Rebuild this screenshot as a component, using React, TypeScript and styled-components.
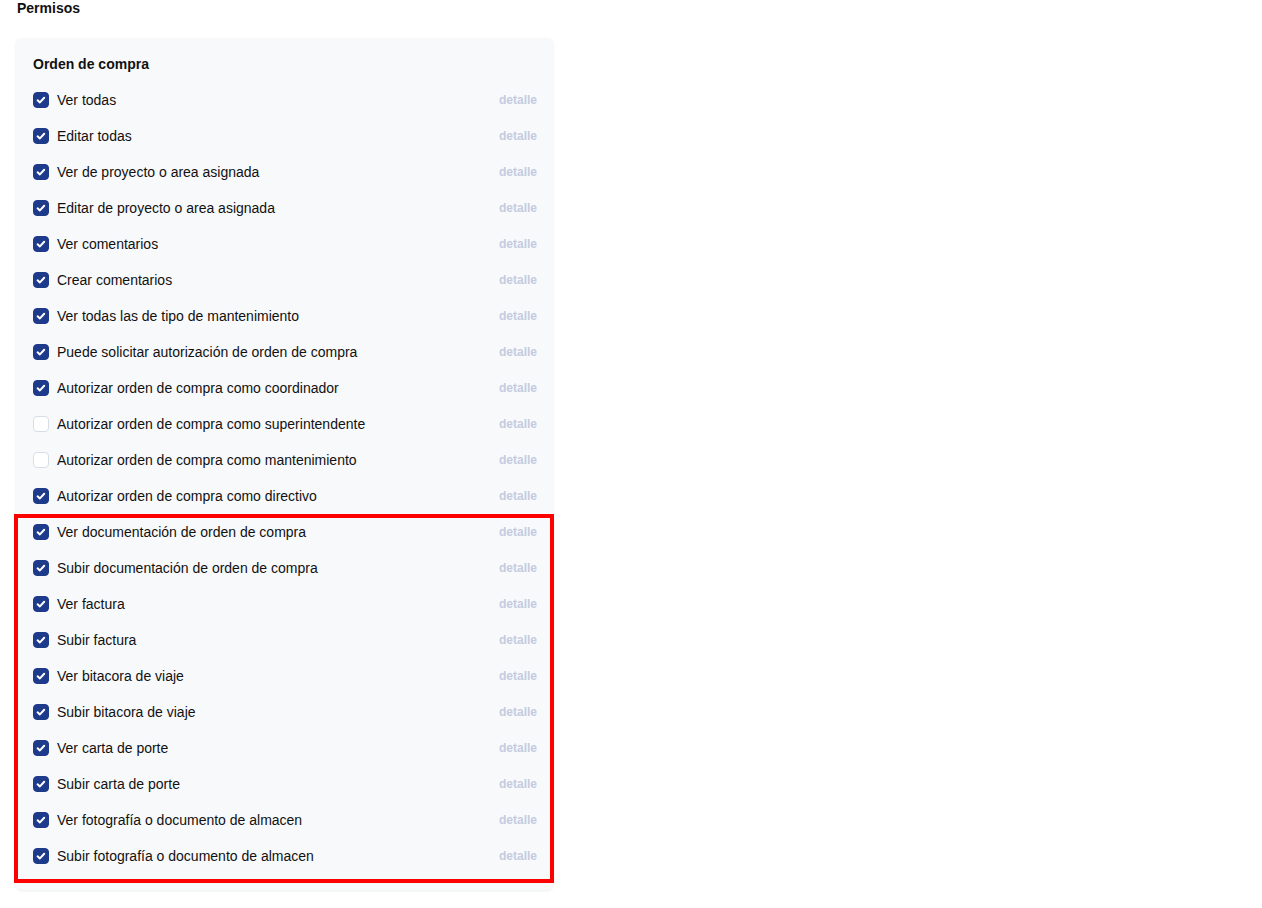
import React from "react";
import styled, { createGlobalStyle } from "styled-components";

const Global = createGlobalStyle`
  html, body { margin: 0; padding: 0; background: #ffffff; }
  body { font-family: "Liberation Sans", Arial, Helvetica, sans-serif; color: #111111; }
  * { box-sizing: border-box; }
`;

const Page = styled.div`
  padding: 0 16px;
  width: 1262px;
  min-height: 908px;
`;

const Heading = styled.h2`
  margin: 0 0 22px 1px;
  font-size: 14px;
  line-height: 16px;
  font-weight: 700;
  color: #111111;
`;

const Card = styled.section`
  position: relative;
  width: 537px;
  background: #f8f9fb;
  border-radius: 6px;
  box-shadow: 0 1px 3px rgba(15, 23, 42, 0.08);
  padding: 16px 16px 16px 17px;
`;

const Title = styled.h3`
  margin: 0 0 8px 0;
  font-size: 14px;
  line-height: 20px;
  font-weight: 700;
  color: #111111;
`;

const List = styled.ul`
  list-style: none;
  margin: 0;
  padding: 0;
`;

const Row = styled.li`
  display: flex;
  align-items: center;
  height: 36px;
`;

const Box = styled.span<{ $checked: boolean }>`
  flex: none;
  width: 16px;
  height: 16px;
  border-radius: 4px;
  display: flex;
  align-items: center;
  justify-content: center;
  background: ${(p) => (p.$checked ? "#1e3a8a" : "#ffffff")};
  border: 1px solid ${(p) => (p.$checked ? "#1e3a8a" : "#d8dde6")};
`;

const Label = styled.span`
  flex: 1;
  margin-left: 8px;
  font-size: 14px;
  line-height: 16px;
  color: #111111;
`;

const Detail = styled.a`
  font-size: 12px;
  font-weight: 700;
  color: #c3cce0;
  text-decoration: none;
`;

const Highlight = styled.div`
  position: absolute;
  left: -2px;
  top: 476px;
  width: 540px;
  height: 369px;
  border: 4px solid #ff0000;
  pointer-events: none;
`;

const items: [string, boolean][] = [
  ["Ver todas", true],
  ["Editar todas", true],
  ["Ver de proyecto o area asignada", true],
  ["Editar de proyecto o area asignada", true],
  ["Ver comentarios", true],
  ["Crear comentarios", true],
  ["Ver todas las de tipo de mantenimiento", true],
  ["Puede solicitar autorización de orden de compra", true],
  ["Autorizar orden de compra como coordinador", true],
  ["Autorizar orden de compra como superintendente", false],
  ["Autorizar orden de compra como mantenimiento", false],
  ["Autorizar orden de compra como directivo", true],
  ["Ver documentación de orden de compra", true],
  ["Subir documentación de orden de compra", true],
  ["Ver factura", true],
  ["Subir factura", true],
  ["Ver bitacora de viaje", true],
  ["Subir bitacora de viaje", true],
  ["Ver carta de porte", true],
  ["Subir carta de porte", true],
  ["Ver fotografía o documento de almacen", true],
  ["Subir fotografía o documento de almacen", true],
];

const Check = () => (
  <svg width="12" height="12" viewBox="0 0 12 12" fill="none">
    <path d="M2.6 6.3 L4.9 8.4 L9.2 3.8" stroke="#ffffff" strokeWidth="2" strokeLinecap="round" strokeLinejoin="round" />
  </svg>
);

export default function App() {
  return (
    <Page>
      <Global />
      <Heading>Permisos</Heading>
      <Card>
        <Title>Orden de compra</Title>
        <List>
          {items.map(([label, checked]) => (
            <Row key={label}>
              <Box $checked={checked}>{checked && <Check />}</Box>
              <Label>{label}</Label>
              <Detail>detalle</Detail>
            </Row>
          ))}
        </List>
        <Highlight />
      </Card>
    </Page>
  );
}
